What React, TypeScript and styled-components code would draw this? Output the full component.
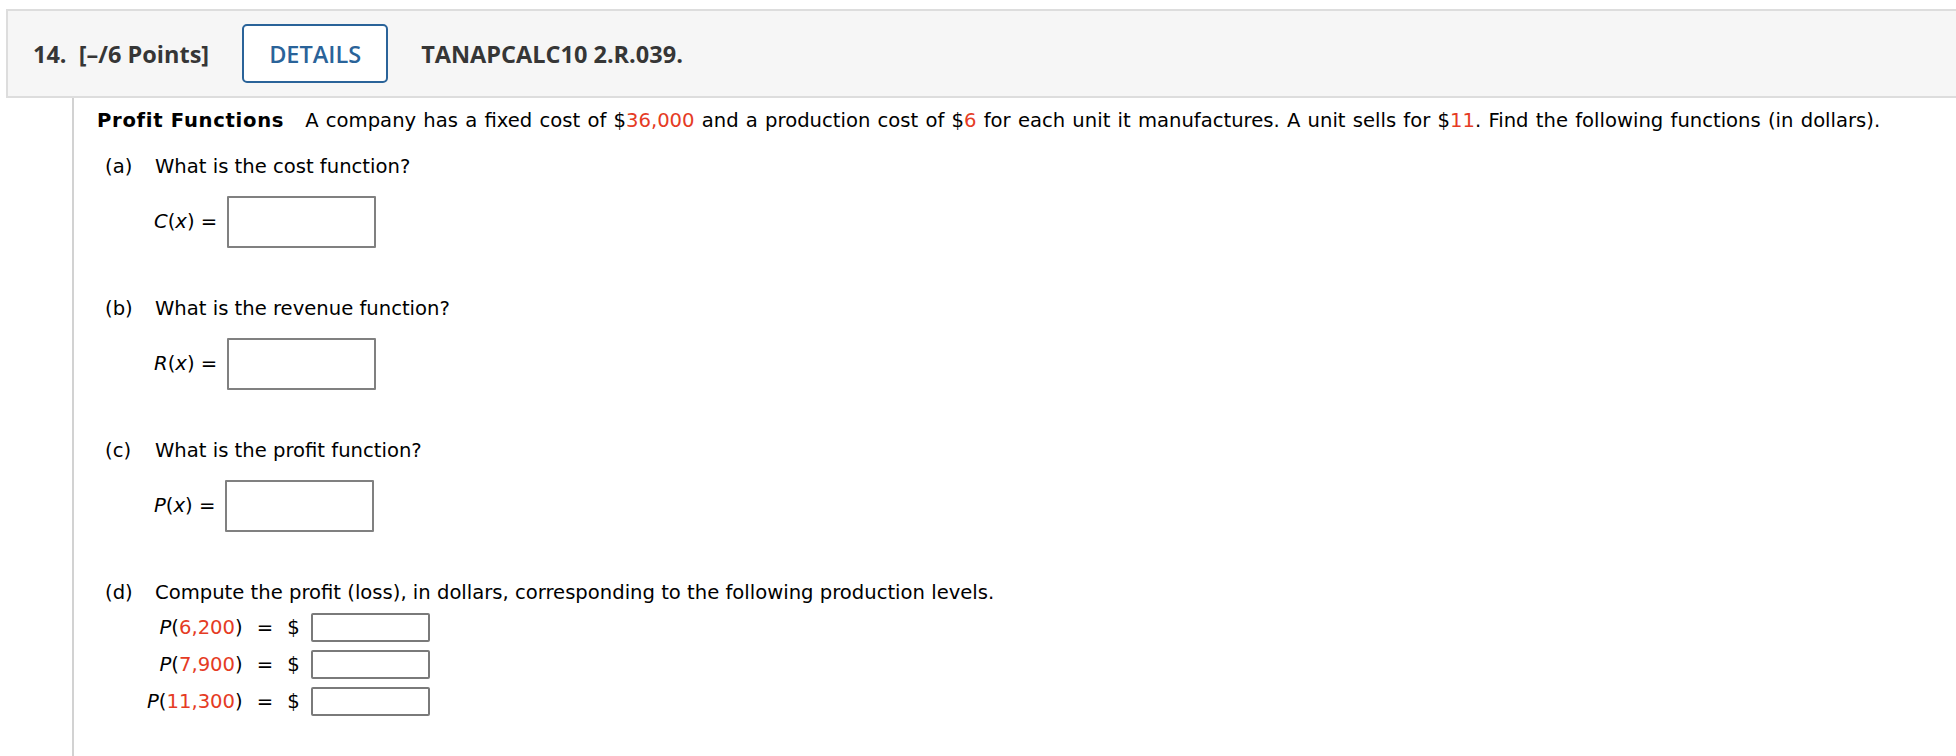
import { ReactElement } from "react";
import styled, { createGlobalStyle } from "styled-components";

const GlobalStyle = createGlobalStyle`
  html, body {
    margin: 0;
    padding: 0;
    background: #ffffff;
  }
  body {
    font-family: Verdana, "DejaVu Sans", sans-serif;
    color: #000000;
  }
`;

const Page = styled.div`
  padding-top: 9px;
  padding-left: 6px;
  min-height: 747px;
  display: flex;
  flex-direction: column;
`;

const Header = styled.header`
  display: flex;
  align-items: center;
  gap: 33px;
  height: 85px;
  margin-right: -10px;
  padding-left: 25px;
  background: #f6f6f6;
  border: 2px solid #dddddd;
  font-family: "Open Sans", "Liberation Sans", sans-serif;
  font-weight: 700;
  font-size: 23.5px;
  color: #363636;
`;

const Points = styled.span`
  white-space: pre;
`;

const DetailsButton = styled.button`
  width: 146px;
  height: 59px;
  background: #ffffff;
  border: 2px solid #2a6399;
  border-radius: 5px;
  color: #2a6399;
  font-family: inherit;
  font-weight: 600;
  font-size: 23.5px;
  padding: 0;
  cursor: pointer;
`;

const Body = styled.section`
  flex: 1;
  margin-left: 66px;
  border-left: 2px solid #d2d2d2;
  padding: 12px 0 0 23px;
  font-size: 19.6px;
  line-height: 22px;
`;

const Prompt = styled.p`
  margin: 0 0 24px;
  white-space: nowrap;
  word-spacing: 1px;
`;

const Title = styled.b`
  margin-right: 21px;
  letter-spacing: 0.7px;
  word-spacing: 0;
`;

const Red = styled.span`
  color: #e53b24;
`;

const Var = styled.i`
  font-style: italic;
`;

const Part = styled.div`
  padding-left: 8px;
  margin-bottom: ${(p: { $last?: boolean }) => (p.$last ? "0" : "50px")};
`;

const Question = styled.div`
  display: flex;
`;

const PartLabel = styled.span`
  width: 50px;
`;

const AnswerRow = styled.div`
  display: flex;
  align-items: center;
  margin-top: 18px;
  padding-left: 49px;
`;

const AnswerLabel = styled.span`
  margin-right: 10px;
`;

const BigInput = styled.input`
  box-sizing: border-box;
  width: 149px;
  height: 52px;
  border: 2px solid #808080;
  border-radius: 1px;
  background: #ffffff;
`;

const LevelTable = styled.table`
  border-collapse: collapse;
  margin-top: 5px;
  margin-left: 42px;
`;

const LevelRow = styled.tr`
  height: 37px;
`;

const LevelLabel = styled.td`
  text-align: right;
  padding: 0;
  white-space: nowrap;
`;

const Eq = styled.td`
  padding: 0 14px;
`;

const Dollar = styled.td`
  padding: 0 10px 0 0;
`;

const SmallInput = styled.input`
  box-sizing: border-box;
  width: 119px;
  height: 29px;
  border: 2px solid #7a7a7a;
  border-radius: 2px;
  background: #ffffff;
  display: block;
`;

const parts = [
  { key: "a", text: "What is the cost function?", fn: "C" },
  { key: "b", text: "What is the revenue function?", fn: "R" },
  { key: "c", text: "What is the profit function?", fn: "P" },
];

const levels = ["6,200", "7,900", "11,300"];

const App = (): ReactElement => {
  return (
    <>
      <GlobalStyle />
      <Page>
        <Header>
          <Points>{"14.  [–/6 Points]"}</Points>
          <DetailsButton>DETAILS</DetailsButton>
          <span>TANAPCALC10 2.R.039.</span>
        </Header>

        <Body>
          <Prompt>
            <Title>Profit Functions</Title>A company has a fixed cost of $
            <Red>36,000</Red> and a production cost of $<Red>6</Red> for each
            unit it manufactures. A unit sells for $<Red>11</Red>. Find the
            following functions (in dollars).
          </Prompt>

          {parts.map((part) => (
            <Part key={part.key}>
              <Question>
                <PartLabel>({part.key})</PartLabel>
                <span>{part.text}</span>
              </Question>
              <AnswerRow>
                <AnswerLabel>
                  <Var>{part.fn}</Var>(<Var>x</Var>) =
                </AnswerLabel>
                <BigInput type="text" />
              </AnswerRow>
            </Part>
          ))}

          <Part $last>
            <Question>
              <PartLabel>(d)</PartLabel>
              <span>
                Compute the profit (loss), in dollars, corresponding to the
                following production levels.
              </span>
            </Question>
            <LevelTable>
              <tbody>
                {levels.map((level) => (
                  <LevelRow key={level}>
                    <LevelLabel>
                      <Var>P</Var>(<Red>{level}</Red>)
                    </LevelLabel>
                    <Eq>=</Eq>
                    <Dollar>$</Dollar>
                    <td>
                      <SmallInput type="text" />
                    </td>
                  </LevelRow>
                ))}
              </tbody>
            </LevelTable>
          </Part>
        </Body>
      </Page>
    </>
  );
};

export default App;
